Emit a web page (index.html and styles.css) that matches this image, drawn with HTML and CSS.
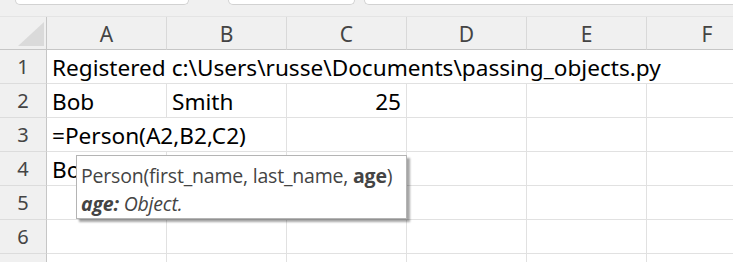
FILE: index.html
```html
<!DOCTYPE html>
<html lang="en">
<head>
  <meta charset="UTF-8">
  <title>Sheet1</title>
  <link rel="stylesheet" href="styles.css">
</head>
<body>
  <div class="tabs">
    <span class="tab tab1"></span>
    <span class="tab tab2"></span>
    <span class="tab tab3"></span>
  </div>
  <div class="sheet">
    <div class="grid">
      <div class="corner"><span class="tri"></span></div>
      <div class="colhead">A</div>
      <div class="colhead">B</div>
      <div class="colhead">C</div>
      <div class="colhead">D</div>
      <div class="colhead">E</div>
      <div class="colhead last">F</div>

      <div class="rowhead">1</div>
      <div class="cell span6">Registered c:\Users\russe\Documents\passing_objects.py</div>

      <div class="rowhead">2</div>
      <div class="cell">Bob</div>
      <div class="cell">Smith</div>
      <div class="cell num">25</div>
      <div class="cell"></div>
      <div class="cell"></div>
      <div class="cell"></div>

      <div class="rowhead">3</div>
      <div class="cell span2">=Person(A2,B2,C2)</div>
      <div class="cell"></div>
      <div class="cell"></div>
      <div class="cell"></div>
      <div class="cell"></div>

      <div class="rowhead">4</div>
      <div class="cell">Bob</div>
      <div class="cell"></div>
      <div class="cell"></div>
      <div class="cell"></div>
      <div class="cell"></div>
      <div class="cell"></div>

      <div class="rowhead">5</div>
      <div class="cell"></div>
      <div class="cell"></div>
      <div class="cell"></div>
      <div class="cell"></div>
      <div class="cell"></div>
      <div class="cell"></div>

      <div class="rowhead">6</div>
      <div class="cell"></div>
      <div class="cell"></div>
      <div class="cell"></div>
      <div class="cell"></div>
      <div class="cell"></div>
      <div class="cell"></div>

      <div class="rowhead"></div>
      <div class="cell"></div>
      <div class="cell"></div>
      <div class="cell"></div>
      <div class="cell"></div>
      <div class="cell"></div>
      <div class="cell"></div>
    </div>

    <!-- 函数参数提示 -->
    <div class="tip">
      <div class="sig">Person(first_name, last_name, <b>age</b>)</div>
      <div class="arg"><b>age:</b> Object.</div>
    </div>
  </div>
</body>
</html>
```

FILE: styles.css
```css
html,body{margin:0;padding:0}
body{
  width: 733px;
  height: 262px;
  overflow: hidden;
  background: #fff;
  font-family: "Noto Sans", "Open Sans", sans-serif;
}
.tabs {
  height: 17px;
  background: #f0f0f0;
  display: flex;
  align-items: flex-start;
  box-sizing: border-box;
  border-bottom: 1px solid #e4e4e4;
}
.tab {
  display: block;
  height: 4px;
  background: #fff;
  border: 1px solid #d2d2d2;
  border-top: 0;
  border-radius: 0 0 7px 7px;
}
.tab1 {
  margin-left: 15px;
  width: 172px;
}
.tab2 {
  margin-left: 39px;
  width: 125px;
}
.tab3 {
  margin-left: 9px;
  flex: 1;
  border-right: 0;
  border-radius: 0 0 0 7px;
}
.sheet {
  position: relative;
}
.grid {
  display: grid;
  grid-template-columns: 47px repeat(5, 120px) 120px;
  grid-template-rows: 33px repeat(7, 34px);
}
.grid > div {
  box-sizing: border-box;
  white-space: nowrap;
}
.corner {
  background: #f0f0f0;
  border-right: 1px solid #c6c6c6;
  border-bottom: 1px solid #c6c6c6;
  position: relative;
}
.tri {
  position: absolute;
  left: 18px;
  top: 5px;
  width: 0;
  height: 0;
  border-left: 26px solid transparent;
  border-bottom: 24px solid #dadada;
}
.colhead {
  background: #f0f0f0;
  border-right: 1px solid #d9d9d9;
  border-bottom: 1px solid #c6c6c6;
  color: #444;
  font-size: 21px;
  text-align: center;
  line-height: 33px;
  padding-top: 1px;
}
.colhead.last {
  border-right: 0;
}
.rowhead {
  background: #f0f0f0;
  border-right: 1px solid #c6c6c6;
  border-bottom: 1px solid #dcdcdc;
  color: #444;
  font-size: 20px;
  text-align: center;
  line-height: 34px;
}
.cell {
  border-right: 1px solid #e1e1e1;
  border-bottom: 1px solid #e1e1e1;
  color: #000;
  font-size: 22.6px;
  line-height: 33px;
  padding: 1px 5px 0;
}
.cell.num {
  text-align: right;
}
.span6 {
  grid-column: span 6;
  border-right: 0;
}
.span2 {
  grid-column: span 2;
}
.tip {
  position: absolute;
  left: 76px;
  top: 138px;
  width: 331px;
  height: 64px;
  box-sizing: border-box;
  background: #fff;
  border: 1px solid #b4b4b4;
  box-shadow: 3px 3px 2px rgba(0,0,0,0.35);
  color: #444;
  font-family: "Open Sans", "Noto Sans", sans-serif;
  font-size: 19.5px;
  padding: 6px 0 0 4px;
  line-height: 28px;
  letter-spacing: -0.2px;
}
.tip .arg {
  font-style: italic;
}
```
